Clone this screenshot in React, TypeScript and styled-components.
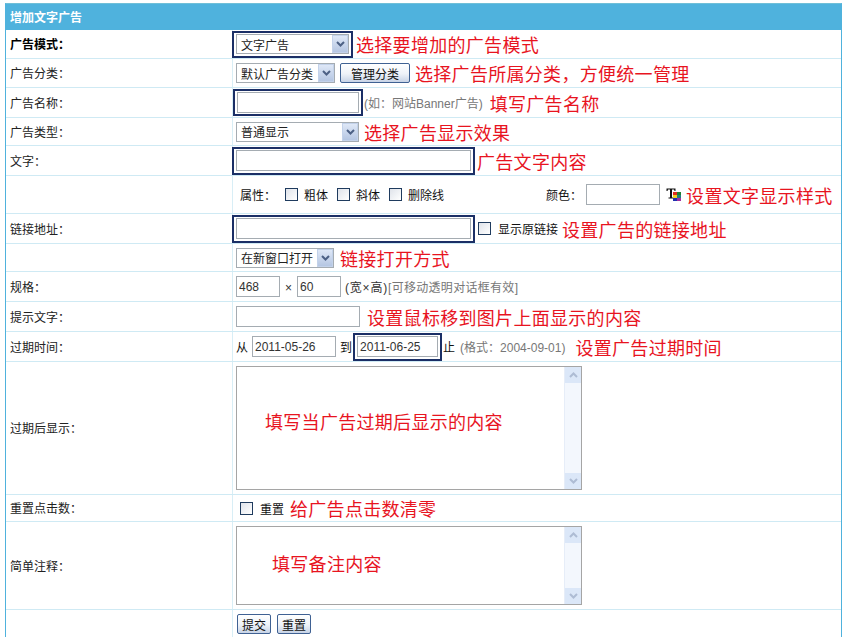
import React from "react";
import styled, { createGlobalStyle } from "styled-components";

const Global = createGlobalStyle`
  html, body { margin: 0; padding: 0; background: #fff; }
  body { width: 848px; height: 637px; overflow: hidden; font-family: "Liberation Sans", "Noto Sans CJK SC", sans-serif; font-size: 12px; color: #222; }
`;
const Page = styled.div`padding: 3px 6px 0 5px;`;
const Frame = styled.div`
  border: 1px solid #4fb2dd; border-width: 1px 1px 0 1px; border-top-color: #6fbfd8;
`;
const Header = styled.div`
  height: 26px; background: #4fb2dd; color: #fff; font-weight: 700; font-size: 12px; line-height: 28px; padding-left: 4px;
`;
const Row = styled.div<{ $h: number }>`
  display: grid; grid-template-columns: 227px 1fr; height: ${p => p.$h}px; box-sizing: border-box; border-bottom: 1px solid #cfeaf4;
`;
const Label = styled.div<{ $bold?: boolean }>`
  display: flex; align-items: center; padding: 2px 0 0 4px; border-right: 1px solid #d8eef6; line-height: 1; font-size: 12px;
  font-weight: ${p => (p.$bold ? 700 : 400)}; color: ${p => (p.$bold ? "#000" : "#222")};
`;
const Field = styled.div`display: flex; align-items: center; padding-left: 3px; line-height: 1; white-space: nowrap;`;
const Note = styled.span<{ $ml?: number }>`
  color: #e8141f; font-size: 18px; line-height: 1; margin-left: ${p => p.$ml ?? 3}px; letter-spacing: 0.3px; font-family: "Noto Sans CJK SC", sans-serif;
`;
const Hint = styled.span<{ $ml?: number; $dark?: boolean; $ls?: number }>`
  color: ${p => (p.$dark ? "#333" : "#777")}; font-size: 12px; margin-left: ${p => p.$ml ?? 0}px; padding-top: 3px; letter-spacing: ${p => p.$ls ?? 0}px;
`;
const Plain = styled.span<{ $ml?: number }>`color: #111; font-size: 12px; margin-left: ${p => p.$ml ?? 0}px; padding-top: 3px;`;
const Mark = styled.div<{ $w: number; $h: number; $ml?: number }>`
  box-sizing: border-box; width: ${p => p.$w}px; height: ${p => p.$h}px; margin-left: ${p => p.$ml ?? 0}px; flex: none;
  border: 2px solid #1b2f66; padding: 2px; display: flex; align-items: center;
`;
const Input = styled.input<{ $w?: number; $ml?: number }>`
  box-sizing: border-box; width: ${p => (p.$w ? `${p.$w}px` : "100%")}; height: 21px; flex: none; margin: 0 0 0 ${p => p.$ml ?? 0}px; padding: 0 2px;
  border: 1px solid #a5acb2; background: #fff; color: #333; font: 12px "Liberation Sans", sans-serif; outline: none;
`;
const Select = styled.div<{ $w: number }>`
  box-sizing: border-box; width: ${p => p.$w}px; height: 20px; flex: none; border: 1px solid #a5acb2; background: #fff;
  display: flex; align-items: center; justify-content: space-between; padding: 0 0 0 4px; font-size: 12px; color: #222;
`;
const SelText = styled.span`padding-top: 3px;`;
const Arrow = styled.span`
  box-sizing: border-box; width: 16px; height: 18px; background: linear-gradient(#dfe8f7, #b5c6e2); border: 1px solid #c3d2ea;
  display: flex; align-items: center; justify-content: center;
`;
const Btn = styled.button<{ $w: number; $ml?: number }>`
  box-sizing: border-box; width: ${p => p.$w}px; height: 20px; margin: 0 0 0 ${p => p.$ml ?? 0}px; padding: 0; flex: none;
  border: 1px solid #3f6193; border-radius: 2px; background: linear-gradient(#fff 0%, #eef2f8 55%, #c7d3e6 100%);
  color: #111; font: 12px "Noto Sans CJK SC", sans-serif;
`;
const Check = styled.span<{ $ml?: number }>`
  box-sizing: border-box; width: 13px; height: 13px; flex: none; margin-left: ${p => p.$ml ?? 0}px;
  border: 1px solid #1f3b5e; background: linear-gradient(135deg, #dfe3ea, #fff);
`;
const Area = styled.div<{ $h: number }>`
  box-sizing: border-box; width: 346px; height: ${p => p.$h}px; flex: none; border: 1px solid #a5a5a5; background: #fff;
  display: grid; grid-template-columns: 1fr 17px;
`;
const AreaText = styled.div<{ $pl: number; $pb: number }>`display: flex; align-items: center; padding: 0 0 ${p => p.$pb}px ${p => p.$pl}px;`;
const Bar = styled.div`
  background: #f3f7fd; border-left: 1px solid #e6edf8; display: flex; flex-direction: column; justify-content: space-between;
`;
const BarBtn = styled.span`
  height: 16px; background: #dbe7f8; display: flex; align-items: center; justify-content: center;
`;
const FieldTop = styled(Field)`align-items: flex-start; padding-top: 4px;`;

const Chev = ({ up, color = "#4d6185" }: { up?: boolean; color?: string }) => (
  <svg width="9" height="6" viewBox="0 0 9 6">
    <path d={up ? "M1 5 L4.5 1.5 L8 5" : "M1 1 L4.5 4.5 L8 1"} fill="none" stroke={color} strokeWidth="2" />
  </svg>
);
const Sel = ({ w, children }: { w: number; children: React.ReactNode }) => (
  <Select $w={w}><SelText>{children}</SelText><Arrow><Chev /></Arrow></Select>
);
const Scroll = () => (
  <Bar><BarBtn><Chev up color="#aebcd4" /></BarBtn><BarBtn><Chev color="#aebcd4" /></BarBtn></Bar>
);
const ColorIcon = () => (
  <svg width="17" height="14" viewBox="0 0 17 14" style={{ marginLeft: 6, flex: "none" }}>
    <path d="M0.5 0.5H9.5V3H8.5L8 1.5H6V9.5H7.5V10.5H2.5V9.5H4V1.5H2L1.5 3H0.5Z" fill="#111" />
    <rect x="7" y="4" width="4" height="3" fill="#e03020" /><rect x="11" y="4" width="4" height="3" fill="#208030" />
    <rect x="7" y="7" width="4" height="3" fill="#f0d020" /><rect x="11" y="7" width="4" height="3" fill="#208080" />
    <rect x="7" y="10" width="4" height="3" fill="#2030b0" /><rect x="11" y="10" width="4" height="3" fill="#a030a0" />
  </svg>
);

export default function App() {
  return (
    <Page>
      <Global />
      <Frame>
        <Header>增加文字广告</Header>
        <Row $h={29}><Label $bold>广告模式：</Label><Field>
          <Mark $w={121} $h={27} $ml={-4}><Sel w={113}>文字广告</Sel></Mark><Note>选择要增加的广告模式</Note>
        </Field></Row>
        <Row $h={29}><Label>广告分类：</Label><Field>
          <Sel w={99}>默认广告分类</Sel><Btn $w={70} $ml={5}>管理分类</Btn><Note $ml={5}>选择广告所属分类，方便统一管理</Note>
        </Field></Row>
        <Row $h={30}><Label>广告名称：</Label><Field>
          <Mark $w={130} $h={27} $ml={-3}><Input /></Mark><Hint $ml={1}>(如：网站Banner广告)</Hint><Note $ml={7}>填写广告名称</Note>
        </Field></Row>
        <Row $h={28}><Label>广告类型：</Label><Field>
          <Sel w={123}>普通显示</Sel><Note $ml={5}>选择广告显示效果</Note>
        </Field></Row>
        <Row $h={30}><Label>文字：</Label><Field>
          <Mark $w={243} $h={28} $ml={-4}><Input /></Mark><Note $ml={2}>广告文字内容</Note>
        </Field></Row>
        <Row $h={38}><Label /><Field>
          <Plain $ml={4}>属性：</Plain><Check $ml={9} /><Plain $ml={6}>粗体</Plain><Check $ml={9} /><Plain $ml={6}>斜体</Plain>
          <Check $ml={9} /><Plain $ml={6}>删除线</Plain><Plain $ml={102}>颜色：</Plain><Input $w={74} $ml={4} /><ColorIcon /><Note $ml={3}>设置文字显示样式</Note>
        </Field></Row>
        <Row $h={30}><Label>链接地址：</Label><Field>
          <Mark $w={243} $h={28} $ml={-4}><Input /></Mark><Check $ml={3} /><Plain $ml={7}>显示原链接</Plain><Note $ml={4}>设置广告的链接地址</Note>
        </Field></Row>
        <Row $h={28}><Label /><Field>
          <Sel w={98}>在新窗口打开</Sel><Note $ml={6}>链接打开方式</Note>
        </Field></Row>
        <Row $h={30}><Label>规格：</Label><Field>
          <Input $w={44} defaultValue="468" /><Hint $ml={5} $dark>×</Hint><Input $w={44} $ml={5} defaultValue="60" />
          <Hint $ml={4} $dark $ls={0.8}>(宽×高)</Hint><Hint $ls={0.3}>[可移动透明对话框有效]</Hint>
        </Field></Row>
        <Row $h={30}><Label>提示文字：</Label><Field>
          <Input $w={124} /><Note $ml={7}>设置鼠标移到图片上面显示的内容</Note>
        </Field></Row>
        <Row $h={30}><Label>过期时间：</Label><Field>
          <Plain>从</Plain><Input $w={84} $ml={4} defaultValue="2011-05-26" /><Plain $ml={4}>到</Plain>
          <Mark $w={89} $h={28} $ml={1}><Input defaultValue="2011-06-25" /></Mark><Plain $ml={1}>止</Plain>
          <Hint $ml={5}>(格式：2004-09-01)</Hint><Note $ml={10}>设置广告过期时间</Note>
        </Field></Row>
        <Row $h={133}><Label>过期后显示：</Label><FieldTop>
          <Area $h={124}><AreaText $pl={28} $pb={14}><Note $ml={0}>填写当广告过期后显示的内容</Note></AreaText><Scroll /></Area>
        </FieldTop></Row>
        <Row $h={27}><Label>重置点击数：</Label><Field>
          <Check $ml={4} /><Plain $ml={7}>重置</Plain><Note $ml={6}>给广告点击数清零</Note>
        </Field></Row>
        <Row $h={88}><Label>简单注释：</Label><FieldTop>
          <Area $h={79}><AreaText $pl={35} $pb={6}><Note $ml={0}>填写备注内容</Note></AreaText><Scroll /></Area>
        </FieldTop></Row>
        <Row $h={40}><Label /><FieldTop>
          <Btn $w={34} $ml={1}>提交</Btn><Btn $w={34} $ml={6}>重置</Btn>
        </FieldTop></Row>
      </Frame>
    </Page>
  );
}
